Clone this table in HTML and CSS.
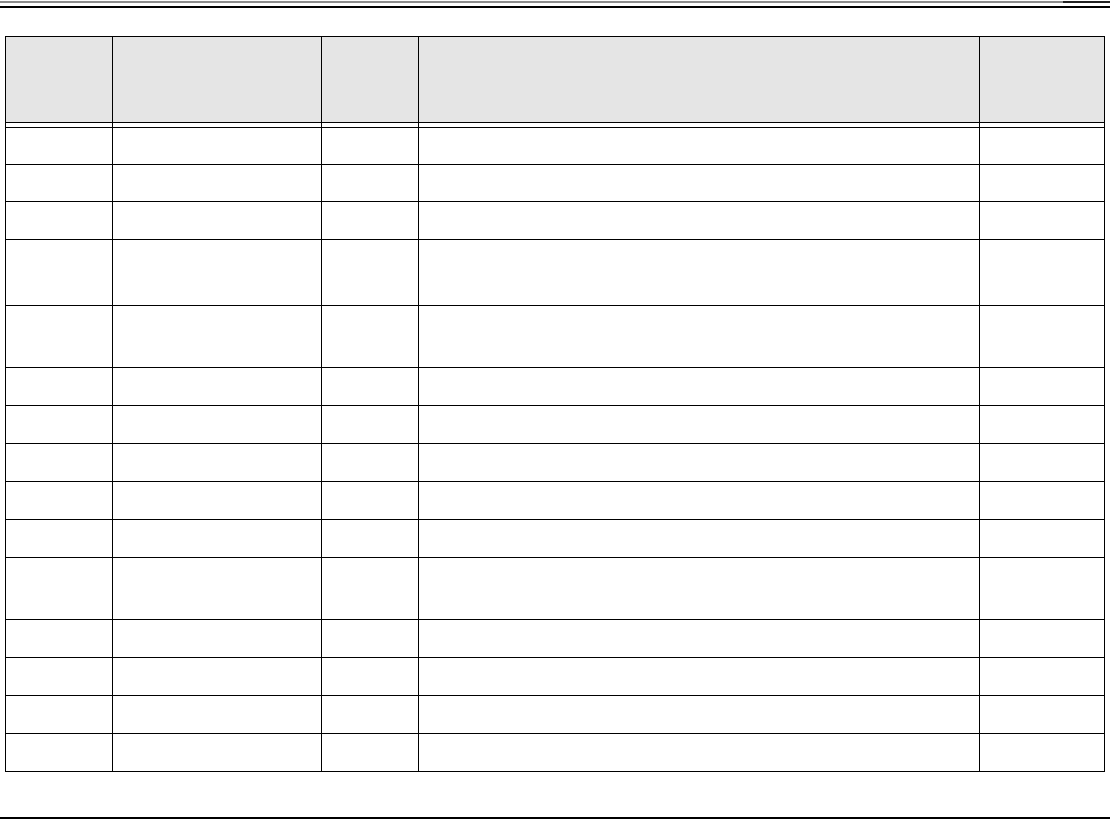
FILE: index.html
```html
<!DOCTYPE html>
<html lang="en">
<head>
<meta charset="utf-8">
<title>Table</title>
<link rel="stylesheet" href="styles.css">
</head>
<body>
<div class="page">
  <div class="topbar">
    <div class="topbar-gray"></div>
    <div class="topbar-dark"></div>
  </div>
  <div class="rule-top"></div>
  <div class="grid">
    <div class="cell head"></div><div class="cell head"></div><div class="cell head"></div><div class="cell head"></div><div class="cell head"></div>
    <div class="cell gap"></div><div class="cell gap"></div><div class="cell gap"></div><div class="cell gap"></div><div class="cell gap"></div>
    <div class="cell r"></div><div class="cell r"></div><div class="cell r"></div><div class="cell r"></div><div class="cell r"></div>
    <div class="cell r"></div><div class="cell r"></div><div class="cell r"></div><div class="cell r"></div><div class="cell r"></div>
    <div class="cell r"></div><div class="cell r"></div><div class="cell r"></div><div class="cell r"></div><div class="cell r"></div>
    <div class="cell t"></div><div class="cell t"></div><div class="cell t"></div><div class="cell t"></div><div class="cell t"></div>
    <div class="cell t"></div><div class="cell t"></div><div class="cell t"></div><div class="cell t"></div><div class="cell t"></div>
    <div class="cell r"></div><div class="cell r"></div><div class="cell r"></div><div class="cell r"></div><div class="cell r"></div>
    <div class="cell r"></div><div class="cell r"></div><div class="cell r"></div><div class="cell r"></div><div class="cell r"></div>
    <div class="cell r"></div><div class="cell r"></div><div class="cell r"></div><div class="cell r"></div><div class="cell r"></div>
    <div class="cell r"></div><div class="cell r"></div><div class="cell r"></div><div class="cell r"></div><div class="cell r"></div>
    <div class="cell r"></div><div class="cell r"></div><div class="cell r"></div><div class="cell r"></div><div class="cell r"></div>
    <div class="cell t"></div><div class="cell t"></div><div class="cell t"></div><div class="cell t"></div><div class="cell t"></div>
    <div class="cell r"></div><div class="cell r"></div><div class="cell r"></div><div class="cell r"></div><div class="cell r"></div>
    <div class="cell r"></div><div class="cell r"></div><div class="cell r"></div><div class="cell r"></div><div class="cell r"></div>
    <div class="cell r"></div><div class="cell r"></div><div class="cell r"></div><div class="cell r"></div><div class="cell r"></div>
    <div class="cell r"></div><div class="cell r"></div><div class="cell r"></div><div class="cell r"></div><div class="cell r"></div>
  </div>
  <div class="rule-bottom"></div>
</div>
</body>
</html>
```

FILE: styles.css
```css
html, body {
  margin: 0;
  padding: 0;
  background: #ffffff;
  font-family: "Liberation Sans", Arial, sans-serif;
}

.page {
  width: 1110px;
  height: 819px;
  display: flex;
  flex-direction: column;
  overflow: hidden;
}

.topbar {
  display: flex;
  margin-top: 1px;
  height: 2px;
}

.topbar-gray {
  width: 1063px;
  background: #8c8c8c;
}

.topbar-dark {
  flex: 1;
  background: #222222;
}

.rule-top {
  margin-top: 3px;
  height: 2px;
  background: #000000;
}

.grid {
  margin-top: 28px;
  margin-left: 5px;
  width: 1100px;
  box-sizing: border-box;
  display: grid;
  grid-template-columns: 107px 209px 97px 561px 125px;
  grid-template-rows: 86px 5px 37px 37px 38px 66px 62px repeat(5, 38px) 62px repeat(4, 38px);
  border-left: 1px solid #000;
  border-top: 1px solid #000;
}

.cell {
  box-sizing: border-box;
  border-right: 1px solid #000;
  border-bottom: 1px solid #000;
  background: #ffffff;
}

.head {
  background: #e5e5e5;
}

.rule-bottom {
  margin-top: auto;
  height: 2px;
  background: #000000;
}
```
